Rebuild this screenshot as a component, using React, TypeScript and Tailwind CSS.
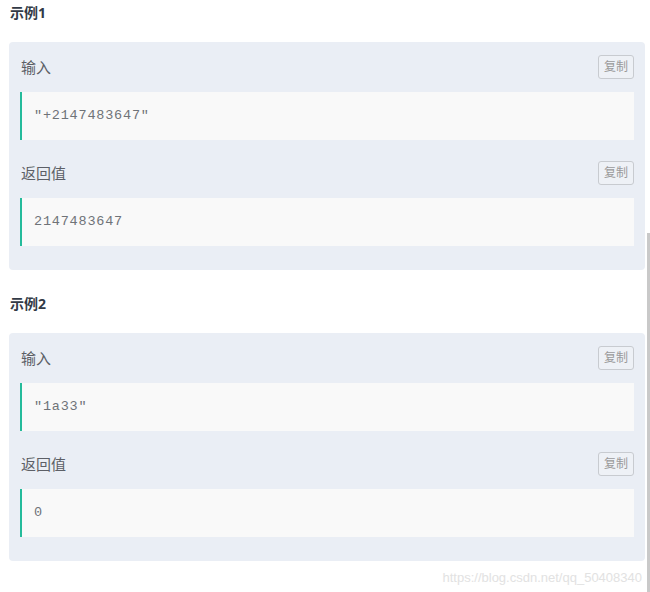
const cn = { fontFamily: '"Noto Sans", "Noto Sans CJK SC", sans-serif' };
const mono = { fontFamily: '"Liberation Mono", "Noto Sans CJK SC", monospace' };

const Section = ({ label, value }: { label: string; value: string }) => (
  <div>
    <div className="flex items-center justify-between h-[24px] mb-[13px]">
      <span className="text-[15px] text-[#5c5f66] leading-[24px] pl-[1px]" style={cn}>
        {label}
      </span>
      <button
        className="w-[36px] h-[24px] rounded-[3px] border border-[#c8cbd0] bg-[#eef1f6] text-[12px] text-[#9a9a9a] leading-[22px] text-center"
        style={cn}
      >
        复制
      </button>
    </div>
    <div className="h-[48px] flex items-center bg-[#f9f9f9] border-l-2 border-[#25bb9b] pl-[12px]">
      <span className="text-[13.5px] tracking-[0.8px] text-[#6f7378]" style={mono}>
        {value}
      </span>
    </div>
  </div>
);

const Example = ({
  title,
  input,
  output,
  first,
}: {
  title: string;
  input: string;
  output: string;
  first?: boolean;
}) => (
  <div>
    <div
      className={`text-[14px] font-bold text-[#323a46] leading-[20px] pl-[10px] mb-[19px] ${
        first ? "pt-[3px]" : "mt-[24px]"
      }`}
      style={cn}
    >
      {title}
    </div>
    <div className="ml-[9px] w-[636px] bg-[#eaeef5] rounded-[4px] px-[11px] pt-[13px] pb-[24px] flex flex-col gap-[21px]">
      <Section label="输入" value={input} />
      <Section label="返回值" value={output} />
    </div>
  </div>
);

export default function App() {
  return (
    <div className="relative w-[650px] h-[592px] bg-white overflow-hidden">
      <Example title="示例1" input={'"+2147483647"'} output="2147483647" first />
      <Example title="示例2" input={'"1a33"'} output="0" />

      {/* watermark */}
      <div
        className="absolute right-[8px] top-[569px] text-[13px] text-[#e2e2e2] leading-[18px]"
        style={{ fontFamily: '"Liberation Sans", Arial, sans-serif' }}
      >
        https://blog.csdn.net/qq_50408340
      </div>

      {/* scrollbar edge */}
      <div className="absolute right-0 top-[233px] w-[3px] h-[359px] bg-[#c9c9c9]" />
    </div>
  );
}
